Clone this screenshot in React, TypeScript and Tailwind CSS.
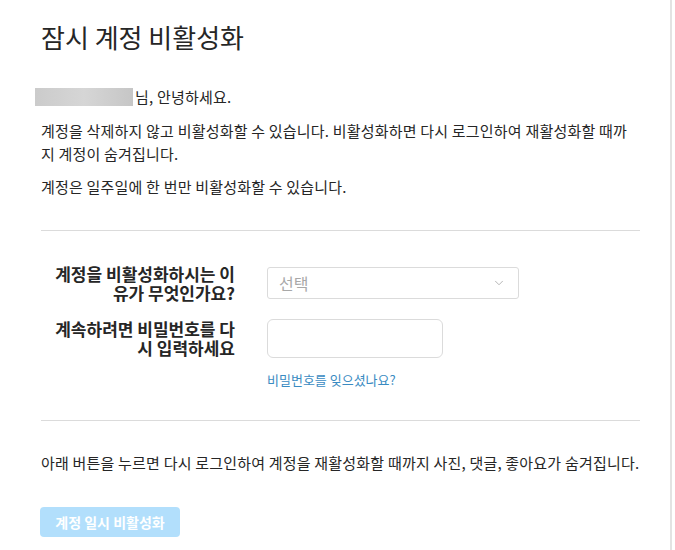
import { ChevronDown } from 'lucide-react'

export default function App() {
  return (
    <div className="min-h-[550px] w-[672px] border-r-2 border-[#e3e3e3] bg-white text-[#262626] [font-family:'Noto_Sans_CJK_KR','Liberation_Sans',sans-serif]">
      <div className="w-[640px] pl-[41px] pt-[20px]">
        <h2 className="text-[26px] leading-[34px] font-normal">잠시 계정 비활성화</h2>

        <div className="mt-[33px] flex items-center text-[15px] leading-[20px] tracking-[0.2px]">
          <span className="-ml-[6px] mr-[2px] h-[18px] w-[98px] bg-gradient-to-r from-[#cbcbcb] via-[#d6d6d6] to-[#c6c6c6]" />
          <span>님, 안녕하세요.</span>
        </div>

        <p className="mt-[12px] text-[15px] leading-[23px] tracking-[0.2px]">
          계정을 삭제하지 않고 비활성화할 수 있습니다. 비활성화하면 다시 로그인하여 재활성화할 때까지 계정이 숨겨집니다.
        </p>
        <p className="mt-[10px] text-[15px] leading-[24px] tracking-[0.2px]">계정은 일주일에 한 번만 비활성화할 수 있습니다.</p>

        <div className="mt-[31px] border-t border-[#dbdbdb]" />

        <div className="mt-[33px] flex flex-col gap-[17px]">
          <div className="flex items-center">
            <label className="w-[194px] shrink-0 text-right text-[17px] font-semibold leading-[19px]">
              계정을 비활성화하시는 이유가 무엇인가요?
            </label>
            <div className="ml-[32px] flex h-[32px] w-[252px] items-center justify-between rounded-[3px] border border-[#dbdbdb] pl-[11px] pr-[12px]">
              <span className="text-[16px] text-[#a8a8a8]">선택</span>
              <ChevronDown className="h-[14px] w-[14px] text-[#9a9a9a]" strokeWidth={1.25} />
            </div>
          </div>

          <div className="flex items-start">
            <label className="w-[194px] shrink-0 text-right text-[17px] font-semibold leading-[19px]">
              계속하려면 비밀번호를 다시 입력하세요
            </label>
            <div className="ml-[32px] flex flex-col">
              <input
                type="password"
                className="h-[39px] w-[176px] rounded-[6px] border border-[#dbdbdb] outline-none"
              />
              <a className="mt-[14px] text-[13px] leading-[16px] text-[#3a8bc2]">비밀번호를 잊으셨나요?</a>
            </div>
          </div>
        </div>

        <div className="mt-[32px] border-t border-[#dbdbdb]" />

        <p className="mt-[32px] text-[15px] leading-[20px] tracking-[0.2px] whitespace-nowrap">
          아래 버튼을 누르면 다시 로그인하여 계정을 재활성화할 때까지 사진, 댓글, 좋아요가 숨겨집니다.
        </p>

        <button className="-ml-[1px] mt-[34px] h-[30px] w-[140px] rounded-[4px] bg-[#b2dffc] text-[14px] font-bold text-white">
          계정 일시 비활성화
        </button>
      </div>
    </div>
  )
}
